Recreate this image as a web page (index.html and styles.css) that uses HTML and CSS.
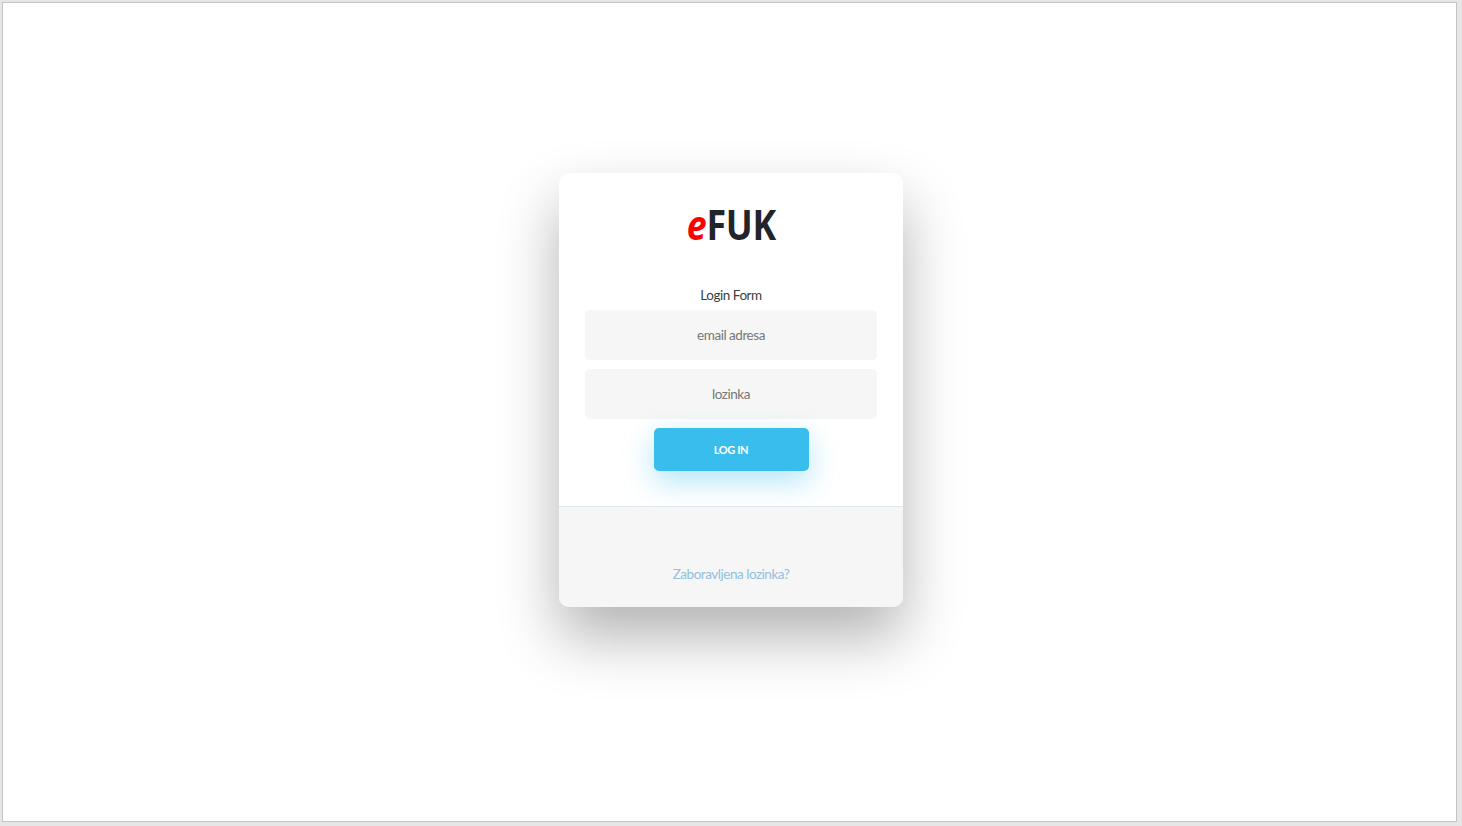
FILE: index.html
```html
<!DOCTYPE html>
<html lang="hr">
<head>
<meta charset="utf-8">
<title>eFUK</title>
<link rel="stylesheet" href="styles.css">
</head>
<body>
<main class="frame">
  <div class="card">
    <div class="card-main">
      <h1 class="logo"><em>e</em>FUK</h1>
      <form class="form">
        <h2 class="form-title">Login Form</h2>
        <input class="field" type="text" placeholder="email adresa">
        <input class="field" type="password" placeholder="lozinka">
        <button class="btn" type="button">LOG IN</button>
      </form>
    </div>
    <div class="card-footer">
      <a class="forgot" href="#">Zaboravljena lozinka?</a>
    </div>
  </div>
</main>
</body>
</html>
```
FILE: styles.css
```css
* { box-sizing: border-box; }
html, body { margin: 0; height: 100%; }
body {
  background: #e6e6e6;
  padding: 2px 5px 4px 2px;
  font-family: "Lato", "Open Sans", sans-serif;
  overflow: hidden;
}
.frame {
  height: 100%;
  background: #fff;
  border: 1px solid #c4c4c4;
  display: flex;
  justify-content: center;
  padding-top: 170px;
}
.card {
  width: 344px;
  height: 434px;
  margin-left: 3px;
  background: #fff;
  border-radius: 10px;
  box-shadow: 0 30px 60px rgba(0,0,0,.3);
  display: flex;
  flex-direction: column;
}
.card-main {
  height: 334px;
  padding: 24px 26px 0;
  display: flex;
  flex-direction: column;
  align-items: center;
  border-bottom: 1px solid #dfe9f0;
}
.logo {
  margin: 0;
  height: 90px;
  font: 700 42px/54px "Open Sans", sans-serif;
  color: #212529;
  letter-spacing: -.3px;
  text-align: center;
  transform: scaleX(.85);
}
.logo em { color: #f00; font-style: italic; }
.form { width: 100%; display: flex; flex-direction: column; align-items: center; }
.form-title {
  margin: 0;
  height: 23px;
  font-size: 13.5px;
  font-weight: 400;
  letter-spacing: -.47px;
  line-height: 16px;
  color: #3a3f44;
}
.field {
  width: 100%;
  height: 50px;
  margin-bottom: 9px;
  border: 0;
  border-radius: 5px;
  background: #f6f6f6;
  text-align: center;
  font: 400 13.5px "Lato", sans-serif;
  letter-spacing: -.47px;
  color: #0d0d0d;
}
.field::placeholder { color: #777; opacity: 1; }
.btn {
  width: 155px;
  height: 43px;
  border: 0;
  border-radius: 5px;
  background: #39bdec;
  color: #fff;
  font: 700 11px "Lato", sans-serif;
  letter-spacing: -.4px;
  box-shadow: 0 10px 30px rgba(57,189,236,.4);
}
.card-footer {
  flex: 1;
  background: #f6f6f6;
  border-radius: 0 0 10px 10px;
  display: flex;
  justify-content: center;
  align-items: flex-end;
  padding-bottom: 24px;
}
.forgot {
  font-size: 13.5px;
  letter-spacing: -.47px;
  line-height: 18px;
  color: #92bfdf;
  text-decoration: none;
}
```
